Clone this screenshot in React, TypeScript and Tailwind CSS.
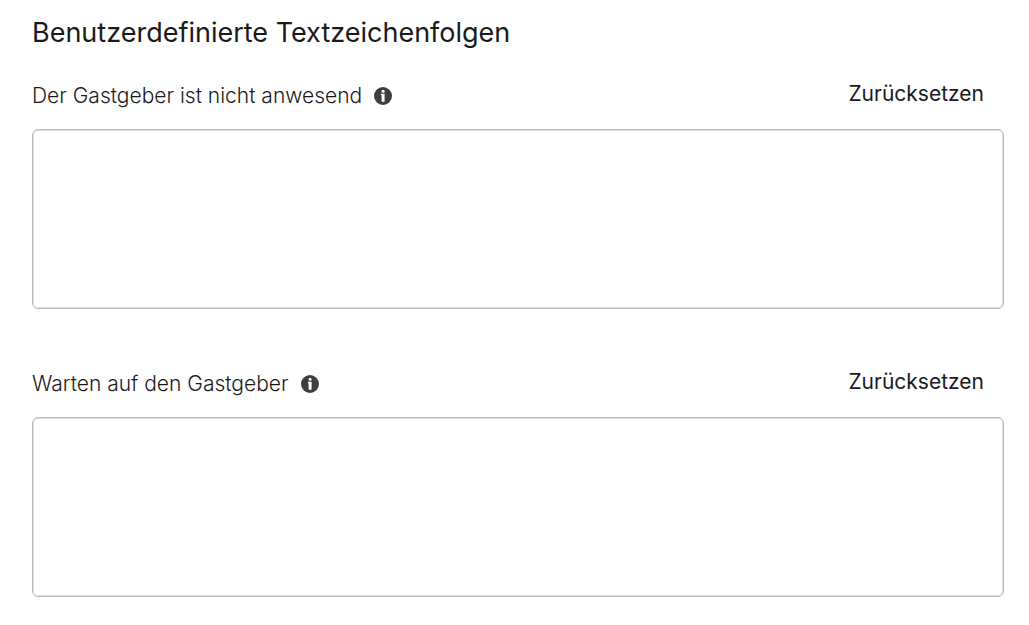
import React from "react";

function InfoIcon() {
  return (
    <svg width="18" height="18" viewBox="0 0 18 18" aria-hidden="true">
      <circle cx="9" cy="9" r="9" fill="#3d3d42" />
      <rect x="7.6" y="3" width="3" height="2.8" rx="1" fill="#fff" />
      <path d="M6.9 6.8h3.7v8H7.6V8.2h-.7z" fill="#fff" />
    </svg>
  );
}

function TextString({ id, label }: { id: string; label: string }) {
  return (
    <section>
      <div className="flex items-start justify-between pr-5">
        <div className="flex items-center gap-3 pt-1">
          <label htmlFor={id} className="text-[21px] leading-7 font-light">{label}</label>
          <InfoIcon />
        </div>
        <button type="button" className="text-[21px] leading-8">Zurücksetzen</button>
      </div>
      <textarea
        id={id}
        className="mt-[19px] block h-45 w-full resize-none rounded-md border border-[#b8b9bb] bg-white p-3 text-xl inset-ring inset-ring-[#dededf] outline-none"
      />
    </section>
  );
}

export default function App() {
  return (
    <main className="bg-white pt-[17px] pr-[25px] pb-7 pl-8 font-['Inter',sans-serif] text-[#1a1a1c]">
      <h1 className="text-[27px] leading-8">Benutzerdefinierte Textzeichenfolgen</h1>
      <div className="mt-[29px] flex flex-col gap-[57px]">
        <TextString id="host-absent" label="Der Gastgeber ist nicht anwesend" />
        <TextString id="host-waiting" label="Warten auf den Gastgeber" />
      </div>
    </main>
  );
}
